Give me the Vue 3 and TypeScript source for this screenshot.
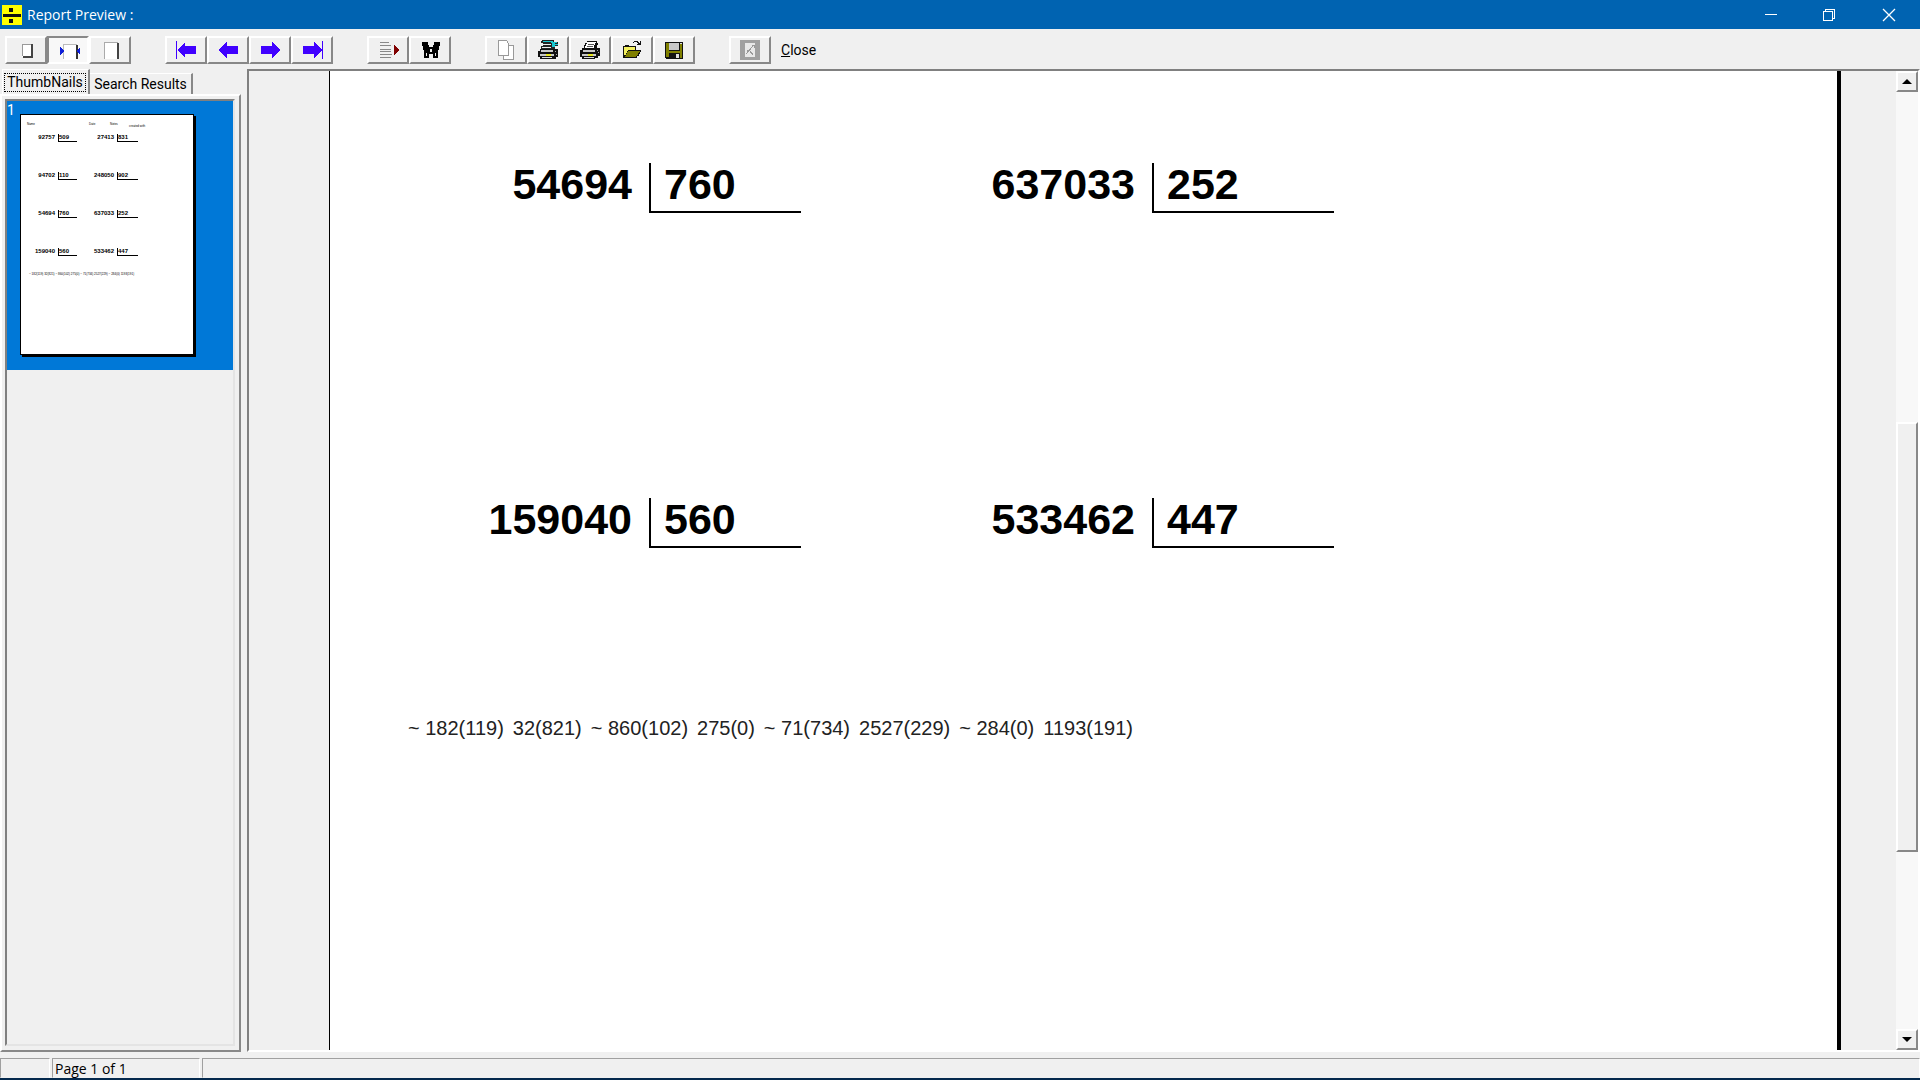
<script setup lang="ts">
import { ref } from 'vue'

interface Problem {
  dividend: string
  divisor: string
}

const problems: Problem[] = [
  { dividend: '92757', divisor: '509' },
  { dividend: '27413', divisor: '831' },
  { dividend: '94702', divisor: '110' },
  { dividend: '248050', divisor: '902' },
  { dividend: '54694', divisor: '760' },
  { dividend: '637033', divisor: '252' },
  { dividend: '159040', divisor: '560' },
  { dividend: '533462', divisor: '447' },
]
const visibleProblems = problems.slice(4)

const answers: string[] = [
  '~ 182(119)', '32(821)', '~ 860(102)', '275(0)',
  '~ 71(734)', '2527(229)', '~ 284(0)', '1193(191)',
]

const toolGroups: string[][] = [
  ['Whole page', 'Page width', 'Actual size'],
  ['First page', 'Previous page', 'Next page', 'Last page'],
  ['Go to page', 'Find'],
  ['Copy', 'Printer setup', 'Print', 'Open', 'Save'],
  ['Export'],
]

const zoomMode = ref('Page width')
</script>

<template>
  <div class="window">
    <header class="titlebar">
      <svg class="app-icon" width="20" height="20" viewBox="0 0 20 20" shape-rendering="crispEdges">
        <rect width="20" height="20" fill="#ffff00" />
        <path d="M1 9h18v3H1zM7 3h4v4H7zM7 14h4v4H7z" fill="#111" />
      </svg>
      <h1>Report Preview :</h1>
      <div class="window-buttons">
        <button aria-label="Minimize">
          <svg width="14" height="14" viewBox="0 0 14 14" shape-rendering="crispEdges"><path d="M1 6h12v1H1z" fill="#fff" /></svg>
        </button>
        <button aria-label="Restore">
          <svg width="14" height="14" viewBox="0 0 14 14" shape-rendering="crispEdges" fill="none" stroke="#fff"><path d="M1.500 3.500h9v9h-9zM3.500 3V1.500h9v9H11" /></svg>
        </button>
        <button aria-label="Close window">
          <svg width="14" height="14" viewBox="0 0 14 14" fill="none" stroke="#fff" stroke-width="1.300"><path d="M1 1l12 12M13 1L1 13" /></svg>
        </button>
      </div>
    </header>

    <div class="toolbar">
      <div v-for="(group, g) in toolGroups" :key="g" class="tool-group">
        <button v-for="name in group" :key="name" class="tool" :class="{ pressed: name === zoomMode }" :aria-label="name">
          <svg width="24" height="24" viewBox="0 0 24 24" shape-rendering="crispEdges">
            <g v-if="name === 'Whole page'">
              <path d="M8 6h10v13H8z" fill="#fff" />
              <path d="M8 6h10v1H8zM8 6h1v12H8z" fill="#999" />
              <path d="M17 6h2v14H9v-2h8z" fill="#444" />
            </g>
            <g v-else-if="name === 'Page width'">
              <path d="M7 6h14v16H7z" fill="#fff" />
              <path d="M7 6h14v1H7zM7 6h1v15H7z" fill="#bbb" />
              <path d="M20 7h2v14h-2z" fill="#333" />
              <path d="M4 9l4 4-4 4zM24 9l-4 4 4 4z" fill="#1020d8" />
            </g>
            <g v-else-if="name === 'Actual size'">
              <path d="M6 4h14v17H6z" fill="#fff" />
              <path d="M6 4h14v1H6zM6 4h1v17H6z" fill="#aaa" />
              <path d="M19 5h2v16h-2z" fill="#444" />
            </g>
            <g v-else-if="name === 'First page'" fill="#4000ff">
              <path d="M2 3h1v18H2zM3 12l8-8v4h11v8H11v4z" />
            </g>
            <g v-else-if="name === 'Previous page'" fill="#4000ff">
              <path d="M2 12l9-8v4h11v8H11v4z" />
            </g>
            <g v-else-if="name === 'Next page'" fill="#4000ff">
              <path d="M23 12l-9-8v4H3v8h11v4z" />
            </g>
            <g v-else-if="name === 'Last page'" fill="#4000ff">
              <path d="M22 3h1v18h-1zM22 12l-8-8v4H3v8h11v4z" />
            </g>
            <g v-else-if="name === 'Go to page'">
              <path d="M4 4h9v1H4zM4 7h11v1H4zM4 11h11v1H4zM4 13h11v1H4zM4 16h12v1H4zM4 19h11v1H4z" fill="#888" />
              <path d="M18 7l5 5-5 5z" fill="#800000" />
            </g>
            <g v-else-if="name === 'Find'">
              <path d="M4 4h6v3h1v2h4V7h1V4h6v4h-1v4h-1v8h-5v-4h-4v4H6v-8H5V8H4z" fill="#000" />
              <path d="M12 11h2v3h-2zM8 15h1v3H8zM17 15h1v3h-1z" fill="#eee" />
            </g>
            <g v-else-if="name === 'Copy'" fill="#fff" stroke="#999">
              <path d="M9.500 7.500h10v14h-10z" />
              <path d="M4.500 2.500h8l2 3v12h-10z" />
            </g>
            <g v-else-if="name === 'Printer setup'">
              <path d="M6 2h12v2h4v4h-3v3H5V8h2V5H5V3h1z" fill="#222" />
              <path d="M7 3h10v1H7zM15 4h6v1h-6zM16 5h3v4h-3zM19 6h3v1h-3z" fill="#18c8d0" />
              <path d="M7 6h8v1H7zM6 9h9v1H6z" fill="#eee" />
              <path d="M4 11h18v8h-2v2H4v-2H2v-6h2z" fill="#111" />
              <path d="M5 12h12v2H5zM4 16h14v2H4z" fill="#c8c8c8" />
              <path d="M6 19h10v1H6z" fill="#ddd" />
              <path d="M10 16h5v2h-5z" fill="#e8e820" />
              <path d="M19 13h1v1h-1zM20 16h1v1h-1z" fill="#aaa" />
            </g>
            <g v-else-if="name === 'Print'">
              <path d="M9 3h10v2h1v2h-1v3h3v8h-2v2h-3v1H4v-2H2v-7h2v-2h2V7h1V5h2z" fill="#111" />
              <path d="M9 4h9v1h-1v2h-1v3H7V8h1V6h1z" fill="#fff" />
              <path d="M10 6h6v1h-6zM9 8h6v1H9z" fill="#555" />
              <path d="M5 12h12v2H5zM4 16h14v2H4z" fill="#c8c8c8" />
              <path d="M6 19h10v1H6z" fill="#ddd" />
              <path d="M10 16h5v2h-5z" fill="#e8e820" />
              <path d="M19 12h1v1h-1zM20 14h1v1h-1z" fill="#aaa" />
            </g>
            <g v-else-if="name === 'Open'">
              <path d="M3 8h2V7h4v1h7v4h5v2h-1v2h-1v2h-2v2H3z" fill="#111" />
              <path d="M4 9h11v3H8v1H7v2H6v2H4z" fill="#f4f060" />
              <path d="M8 13h12l-4 6H5z" fill="#808000" />
              <path d="M13 4h1V3h4v1h1v1h1V3h1v4h-4V6h1V5h-1V4h-3v1h-1z" fill="#111" />
            </g>
            <g v-else-if="name === 'Save'">
              <path d="M3 4h18v17H4v-1H3z" fill="#111" />
              <path d="M4 5h3v14H4zM18 6h2v14h-2zM5 13h14v2H5z" fill="#808000" />
              <path d="M7 5h10v7H7z" fill="#c8c8c8" />
              <path d="M18 5h2v1h-2zM14 16h3v4h-3z" fill="#ddd" />
            </g>
            <g v-else>
              <path d="M2 2h20v20H2z" fill="#a0a0a0" />
              <path d="M7 5h10v14H7z" fill="#e8e8e8" />
              <path d="M15 8l-7 8M9 12l3 1 3 4M14 7h2v3" fill="none" stroke="#999" />
            </g>
          </svg>
        </button>
      </div>
      <button class="close-link"><u>C</u>lose</button>
    </div>

    <div class="workspace">
      <aside class="sidebar">
        <div class="tabs" role="tablist">
          <button class="tab active" role="tab" aria-selected="true"><span>ThumbNails</span></button>
          <button class="tab" role="tab" aria-selected="false">Search Results</button>
        </div>
        <div class="tab-panel">
          <div class="thumb-list">
            <div class="thumb-item">
              <span class="thumb-number">1</span>
              <div class="thumb-page">
                <div class="thumb-head">
                  <span>Name</span><span>Date</span><span>Notes</span><span class="stamp">created with</span>
                </div>
                <div class="thumb-problems">
                  <div v-for="p in problems" :key="p.dividend" class="thumb-problem">
                    <span class="mini-dividend">{{ p.dividend }}</span>
                    <span class="mini-divisor">{{ p.divisor }}</span>
                  </div>
                </div>
                <p class="thumb-answers">{{ answers.join(' ') }}</p>
              </div>
            </div>
          </div>
        </div>
      </aside>

      <main class="viewer">
        <div class="canvas">
          <article class="sheet">
            <div class="problems">
              <div v-for="p in visibleProblems" :key="p.dividend" class="problem">
                <span class="dividend">{{ p.dividend }}</span>
                <span class="divisor">{{ p.divisor }}</span>
              </div>
            </div>
            <p class="answers">
              <span v-for="a in answers" :key="a">{{ a }}</span>
            </p>
          </article>
        </div>
        <div class="scrollbar">
          <button class="arrow" aria-label="Scroll up">
            <svg width="10" height="6" viewBox="0 0 10 6"><path d="M0 5L5 0l5 5z" fill="#000" /></svg>
          </button>
          <div class="track before"></div>
          <div class="handle"></div>
          <div class="track after"></div>
          <button class="arrow" aria-label="Scroll down">
            <svg width="10" height="6" viewBox="0 0 10 6"><path d="M0 0h10L5 5z" fill="#000" /></svg>
          </button>
        </div>
      </main>
    </div>

    <footer class="statusbar">
      <div class="cell narrow"></div>
      <div class="cell page-count">Page 1 of 1</div>
      <div class="cell rest"></div>
    </footer>
  </div>
</template>

<style>
body {
  margin: 0;
  background: #f0f0f0;
}
</style>

<style scoped>
.window {
  display: flex;
  flex-direction: column;
  height: 100vh;
  box-sizing: border-box;
  border-bottom: 2px solid #04294d;
  background: #f0f0f0;
  color: #000;
  font-family: Roboto, "Liberation Sans", sans-serif;
  font-size: 14px;
  overflow: hidden;
}
button {
  margin: 0;
  padding: 0;
  border: 0;
  background: transparent;
  color: inherit;
  font: inherit;
}
svg {
  display: block;
  overflow: visible;
}

.titlebar {
  display: flex;
  flex: none;
  align-items: center;
  height: 29px;
  padding-left: 2px;
  background: #0063b1;
  color: #fff;
}
.titlebar h1 {
  margin: 0 0 0 5px;
  font: 400 14px/20px "Open Sans", sans-serif;
}
.window-buttons {
  display: flex;
  margin-left: auto;
}
.window-buttons button {
  display: flex;
  align-items: center;
  justify-content: center;
  width: 58px;
  height: 29px;
}
.window-buttons button:last-child {
  width: 62px;
}

.toolbar {
  display: flex;
  flex: none;
  align-items: center;
  gap: 34px;
  height: 40px;
  padding-left: 5px;
  box-sizing: border-box;
  padding-top: 2px;
}
.tool-group {
  display: flex;
}
.tool {
  display: flex;
  align-items: center;
  justify-content: center;
  box-sizing: border-box;
  width: 42px;
  height: 28px;
  border: 2px solid;
  border-color: #fff #888 #888 #fff;
}
.tool.pressed {
  border-color: #888 #fff #fff #888;
  background: #f8f8f8;
}
.close-link {
  margin-left: -24px;
}

.workspace {
  display: flex;
  flex: 1;
  min-height: 0;
  padding-bottom: 6px;
}
.sidebar {
  display: flex;
  flex: none;
  flex-direction: column;
  width: 241px;
  margin-right: 6px;
}
.tabs {
  display: flex;
  align-items: flex-end;
  height: 25px;
  padding-left: 2px;
}
.tab {
  box-sizing: border-box;
  width: 103px;
  height: 21px;
  border-top: 1px solid #fff;
  border-right: 2px solid #888;
  line-height: 20px;
  white-space: nowrap;
}
.tab.active {
  width: 88px;
  height: 25px;
  padding: 3px 2px 2px 1px;
  border-left: 1px solid #fff;
  line-height: 17px;
}
.tab.active span {
  display: block;
  border: 1px dotted #000;
}
.tab-panel {
  display: flex;
  flex: 1;
  padding: 3px 4px 4px 3px;
  border: 2px solid;
  border-color: #fff #888 #888 #fff;
}
.thumb-list {
  flex: 1;
  border: 2px solid;
  border-color: #808080 #e4e4e4 #e4e4e4 #808080;
}
.thumb-item {
  position: relative;
  display: flex;
  height: 256px;
  padding: 13px 0 0 13px;
  background: #0078d7;
}
.thumb-number {
  position: absolute;
  top: 0;
  left: 0;
  color: #fff;
  line-height: 18px;
}
.thumb-page {
  box-sizing: border-box;
  width: 174px;
  height: 241px;
  border: 1px solid #000;
  background: #fff;
  box-shadow: 2px 2px 0 #000;
  font-family: "Liberation Sans", sans-serif;
}
.thumb-head {
  display: grid;
  grid-template-columns: 62px 21px 19px auto;
  height: 19px;
  padding: 7px 0 0 6px;
  box-sizing: border-box;
  font-size: 3px;
  line-height: 5px;
}
.stamp {
  padding-top: 2px;
}
.thumb-problems {
  display: grid;
  grid-template-columns: 59px 61px;
  grid-auto-rows: 38px;
}
.thumb-problem {
  display: flex;
}
.mini-dividend,
.mini-divisor {
  font-size: 6px;
  font-weight: 700;
  line-height: 7px;
}
.mini-dividend {
  width: 34px;
  padding-right: 3px;
  text-align: right;
}
.mini-divisor {
  box-sizing: border-box;
  width: 19px;
  height: 8px;
  border-left: 1px solid #000;
  border-bottom: 1px solid #000;
}
.thumb-problem:nth-child(even) .mini-divisor {
  width: 21px;
}
.thumb-answers {
  margin: -14px 0 0 8px;
  font-size: 3px;
  line-height: 5px;
  white-space: nowrap;
}

.viewer {
  display: flex;
  flex: 1;
  min-width: 0;
  border: 2px solid;
  border-color: #808080 #fff #fff #808080;
}
.canvas {
  display: flex;
  flex: 1;
  min-width: 0;
  padding: 0 55px 0 80px;
}
.sheet {
  flex: 1;
  border-left: 1px solid #000;
  border-right: 4px solid #000;
  background: #fff;
  font-family: "Liberation Sans", Arial, sans-serif;
}
.problems {
  display: grid;
  grid-template-columns: 503px 503px;
  grid-auto-rows: 335px;
  padding-top: 92px;
}
.problem {
  display: flex;
  font-size: 43px;
  font-weight: 700;
  line-height: 43px;
}
.dividend {
  width: 302px;
  padding-right: 17px;
  text-align: right;
}
.divisor {
  box-sizing: border-box;
  width: 152px;
  height: 50px;
  padding-left: 13px;
  border-left: 2px solid #000;
  border-bottom: 2px solid #000;
}
.problem:nth-child(even) .divisor {
  width: 182px;
}
.answers {
  display: flex;
  gap: 9px;
  margin: -117px 0 0;
  padding-left: 78px;
  font-size: 20px;
  line-height: 24px;
  color: #222;
}

.scrollbar {
  display: flex;
  flex: none;
  flex-direction: column;
  width: 22px;
}
.arrow,
.handle {
  box-sizing: border-box;
  border: 2px solid;
  border-color: #fff #888 #888 #fff;
  background: #f0f0f0;
}
.arrow {
  display: flex;
  align-items: center;
  justify-content: center;
  flex: none;
  height: 21px;
}
.track {
  background: #f8f8f8;
}
.track.before {
  flex: 331;
}
.handle {
  flex: 428;
}
.track.after {
  flex: 178;
}

.statusbar {
  display: flex;
  flex: none;
  gap: 2px;
  height: 20px;
}
.cell {
  box-sizing: border-box;
  border: 1px solid;
  border-color: #a0a0a0 #fff transparent #a0a0a0;
  font: 400 14px/20px "Open Sans", sans-serif;
}
.cell.narrow {
  width: 50px;
}
.cell.page-count {
  width: 148px;
  padding-left: 2px;
}
.cell.rest {
  flex: 1;
}
</style>
